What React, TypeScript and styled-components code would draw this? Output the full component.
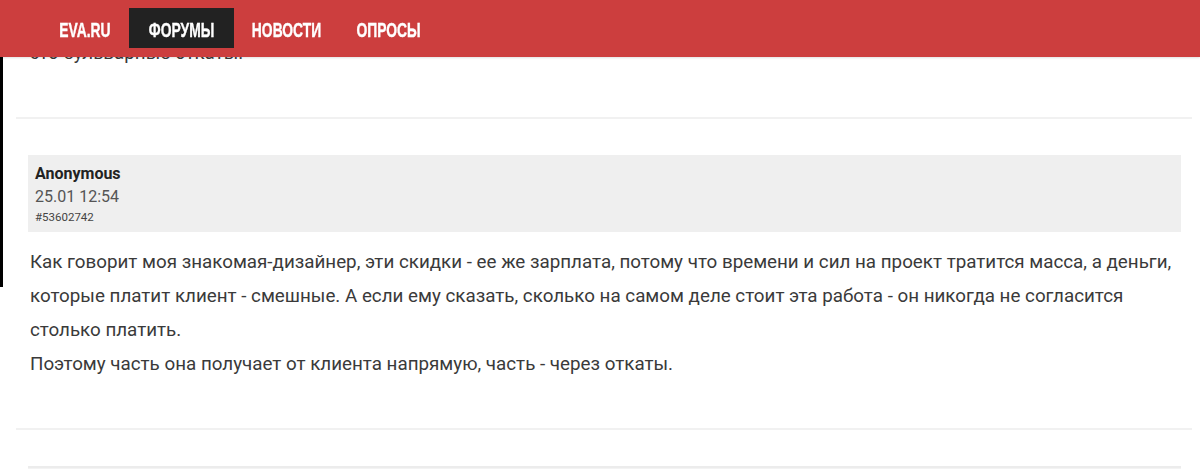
import React from "react";
import styled, { createGlobalStyle } from "styled-components";

const GlobalStyle = createGlobalStyle`
  html, body { margin: 0; padding: 0; background: #fff; }
  body { font-family: Roboto, "Noto Sans", Arial, sans-serif; color: #333; overflow: hidden; }
`;

const Header = styled.header`
  position: fixed;
  top: 0;
  left: 0;
  right: 0;
  height: 57px;
  background: #cc3e3e;
  box-shadow: 0 1px 2px rgba(0, 0, 0, 0.12);
  z-index: 10;
  display: flex;
  align-items: center;
  padding-left: 42px;
  box-sizing: border-box;
`;

const Nav = styled.nav`
  display: flex;
  align-items: center;
  gap: 1px;
  margin-top: -1px;
`;

const NavItem = styled.a<{ $active?: boolean; $w: number }>`
  display: flex;
  align-items: center;
  justify-content: center;
  width: ${(p) => p.$w}px;
  height: 40px;
  overflow: hidden;
  background: ${(p) => (p.$active ? "#222222" : "transparent")};
  color: #fff;
  text-decoration: none;
`;

const NavLabel = styled.span`
  display: inline-block;
  font-family: "Liberation Sans", Arial, sans-serif;
  font-weight: 700;
  font-size: 21px;
  line-height: 24px;
  white-space: nowrap;
  text-transform: uppercase;
  transform: scaleX(0.66);
  transform-origin: center;
  padding-top: 4px;
  -webkit-text-stroke: 0.4px #fff;
`;

const SideBar = styled.div`
  position: fixed;
  left: 0;
  top: 57px;
  width: 3px;
  height: 230px;
  background: #000;
  z-index: 5;
`;

const Page = styled.main`
  padding: 36px 8px 0 16px;
`;

const Post = styled.article`
  border-bottom: 2px solid #f1f1f1;
  padding-bottom: 47px;
  margin-bottom: 36px;
`;

const Meta = styled.div`
  background: #efefef;
  margin: 0 11px 13px 12px;
  padding: 9px 7px 7px;
  display: flex;
  flex-direction: column;
`;

const Author = styled.div`
  font-weight: 700;
  font-size: 16px;
  line-height: 20px;
  color: #222;
`;

const DateLine = styled.div`
  font-size: 16px;
  line-height: 20px;
  color: #555;
  margin-top: 3px;
`;

const PostId = styled.div`
  font-size: 11.5px;
  line-height: 16px;
  color: #444;
  margin-top: 2px;
`;

const Body = styled.div`
  padding: 0 14px;
  font-size: 18.8px;
  line-height: 34px;
  color: #3a3a3a;
`;

const Para = styled.p`
  margin: 0;
`;

const NextMeta = styled.div`
  background: #f3f3f3;
  margin: 0 11px 0 12px;
  height: 40px;
  border-top: 2px solid #ececec;
`;

const navItems = [
  { label: "EVA.RU", w: 86 },
  { label: "Форумы", w: 105, active: true },
  { label: "Новости", w: 103 },
  { label: "Опросы", w: 100 },
];

export default function App() {
  return (
    <>
      <GlobalStyle />
      <Header>
        <Nav>
          {navItems.map((n) => (
            <NavItem key={n.label} $w={n.w} $active={n.active}>
              <NavLabel>{n.label}</NavLabel>
            </NavItem>
          ))}
        </Nav>
      </Header>
      <SideBar />
      <Page>
        <Post>
          <Body>
            <Para>это бульварные откаты.</Para>
          </Body>
        </Post>
        <Post>
          <Meta>
            <Author>Anonymous</Author>
            <DateLine>25.01 12:54</DateLine>
            <PostId>#53602742</PostId>
          </Meta>
          <Body>
            <Para>
              Как говорит моя знакомая-дизайнер, эти скидки - ее же зарплата, потому что времени и сил на проект
              тратится масса, а деньги, которые платит клиент - смешные. А если ему сказать, сколько на самом деле
              стоит эта работа - он никогда не согласится столько платить.
            </Para>
            <Para>Поэтому часть она получает от клиента напрямую, часть - через откаты.</Para>
          </Body>
        </Post>
        <NextMeta />
      </Page>
    </>
  );
}
